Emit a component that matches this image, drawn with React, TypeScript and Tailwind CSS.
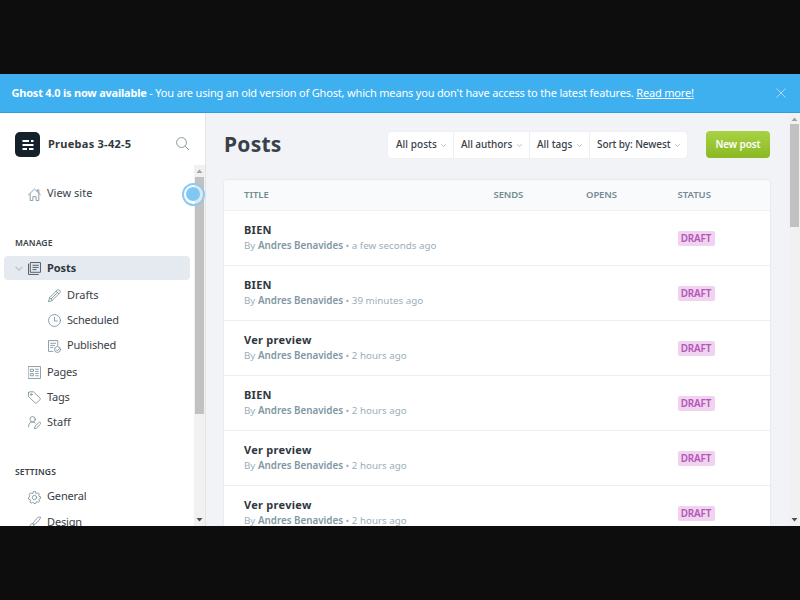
import React from 'react';

type IconProps = { className?: string; children: React.ReactNode };

function Icon({ className = '', children }: IconProps) {
  return (
    <svg viewBox="0 0 24 24" className={`h-[13px] w-[13px] shrink-0 ${className}`} fill="none" stroke="currentColor" strokeWidth="1.5" strokeLinecap="round" strokeLinejoin="round">
      {children}
    </svg>
  );
}

const icons = {
  home: <><path d="M1 12.5 12 2l11 10.5M4 11v12h5v-7h6v7h5V11M17 6V3.5h3V9" /></>,
  posts: <><path d="M5 1h18v18H5zM1 4v19h18M9 6h10M9 10h10M9 14h6" strokeWidth="1.8" /></>,
  pen: <><path d="m1 23 2-7L17 2c1-1 3-1 4.500.500S23 6 22 7L8 21zM3 16l5 5M15 4l5 5M6 18 18.500 5.500" /></>,
  clock: <><circle cx="12" cy="12" r="11" /><path d="M12 6v7h5" /></>,
  published: <><path d="M9 21H1V1h17v9M5 6h9M5 10h7M5 14h4" /><circle cx="17.500" cy="17.500" r="5.500" /><path d="m15 18 2 2 3.500-4" /></>,
  pages: <><path d="M1 1h22v22H1zM5 6h5v4H5zM5 14h5v4H5zM14 6h5M14 10h5M14 14h5M14 18h5" /></>,
  tag: <><path d="M1 3.500V10l12 12c1 1 2 1 3 0l6-6c1-1 1-2 0-3L10 1.500H3Q1 1.500 1 3.500z" /><circle cx="6" cy="6.500" r="1.500" /></>,
  staff: <><circle cx="8.500" cy="6" r="5" /><path d="M1 20c0-6 3-9 7.500-9 2 0 4 1 5 2M12 23l1-4 7-7c2-2 5 1 3 3l-7 7z" /></>,
  gear: <><circle cx="12" cy="12" r="4" /><path d="m10 1-.7 3-2.300 1-2.700-1.600L2 6.500l1.500 2.300-.8 2L0.800 12v3l3 .7 1 2-1.500 2.500 2.500 2.300 2.500-1.500 2 .9L11 23h3l.8-2.500 2-.9 2.500 1.500 2.200-2.300-1.400-2.300.9-2 2.300-.8v-3L20.500 10l-.8-2 1.400-2.500L18.500 3.300 16.300 5l-2-.9L14 1z" /></>,
  brush: <><path d="M9 14C12 8 18 2 22 1.500c2 0 1 2 0 4C19 10 15 14 11 16zM9 14c-4 0-5 2-5 5 0 2-2 3-3 3 5 2 11 0 10-6" /></>,
};

function NavItem({ icon, label, sub = false, text = '' }: { icon: React.ReactNode; label: string; sub?: boolean; text?: string }) {
  return (
    <a className={`flex h-[25.300px] shrink-0 items-center text-[#394047] ${sub ? 'gap-[6px] pl-[48px]' : 'gap-[6px] pl-[28px]'}`}>
      <Icon className="mt-[1px] text-[#738a94]">{icon}</Icon>
      <span className={`text-[11px] ${text}`}>{label}</span>
    </a>
  );
}

function Chevron({ className = '' }: { className?: string }) {
  return (
    <svg viewBox="0 0 10 6" className={`shrink-0 ${className}`} fill="none" stroke="currentColor" strokeWidth="1.400">
      <path d="m.7.7 4.300 4.300L9.300.7" />
    </svg>
  );
}

function Arrow({ down = false }: { down?: boolean }) {
  return (
    <svg viewBox="0 0 11 11" className="h-[11px] w-[11px] shrink-0">
      <path d={down ? 'M2.500 3h6l-3 3.500z' : 'M2.500 8h6l-3-3.500z'} fill={down ? '#505050' : '#a3a3a3'} />
    </svg>
  );
}

const filters = [
  { label: 'All posts', box: 'w-[65px] pl-[8px]', text: 'tracking-[0.050px]' },
  { label: 'All authors', box: 'w-[76px] border-l pl-[7px]', text: 'tracking-[-0.050px]' },
  { label: 'All tags', box: 'w-[60px] border-l pl-[7px]', text: 'tracking-[0.020px]' },
  { label: 'Sort by: Newest', box: 'w-[98px] border-l pl-[7px]', text: 'tracking-[-0.080px]' },
];

const posts = [
  { title: 'BIEN', time: 'a few seconds ago' },
  { title: 'BIEN', time: '39 minutes ago' },
  { title: 'Ver preview', time: '2 hours ago' },
  { title: 'BIEN', time: '2 hours ago' },
  { title: 'Ver preview', time: '2 hours ago' },
  { title: 'Ver preview', time: '2 hours ago' },
];

const columns = 'grid grid-cols-[249.500px_92.500px_91.500px_1fr] pl-[20px]';

function Sidebar() {
  return (
    <aside className="relative flex w-[206px] shrink-0 flex-col border-r border-[#e1e4e8] bg-white">
      <header className="flex h-[52px] shrink-0 items-start pl-[15px] pt-[19px]">
        <div className="flex h-[25px] w-[25px] items-center justify-center rounded-[5px] bg-[#15212a]">
          <svg viewBox="0 0 12 12" className="h-3 w-3" fill="#fff">
            <path d="M0.500 1h6.500v2H0.500zM9 1h2.500v2H9zM0.500 5h11v2H0.500zM0.500 9h4.500v2H0.500zM7 9h4.500v2H7z" />
          </svg>
        </div>
        <strong className="ml-[8px] w-[128px] text-[11px] font-bold leading-[24px] tracking-[0.270px] text-[#30383e]">Pruebas 3-42-5</strong>
        <svg viewBox="0 0 14 14" className="mt-[5px] h-[14px] w-[14px]" fill="none" stroke="#7b8c96" strokeWidth="0.900">
          <circle cx="5.500" cy="5.500" r="4.900" />
          <path d="m9.200 9.200 4 4" />
        </svg>
      </header>
      <div className="flex min-h-0 flex-1">
        <nav className="flex w-[194px] shrink-0 flex-col overflow-hidden pt-[16px]">
          <NavItem icon={icons.home} label="View site" text="tracking-[0.020px]" />
          <h4 className="mt-[28px] h-[17px] shrink-0 pl-[15px] text-[8.500px] font-semibold leading-[17px] tracking-[0.120px] text-[#394047]">MANAGE</h4>
          <a className="ml-[4px] mt-[5px] flex h-[24px] w-[185.500px] shrink-0 items-center rounded-[4px] bg-[#e5eaf1] pl-[11px] text-[#30383e]">
            <Chevron className="h-[5px] w-[8px] text-[#b5bec6]" />
            <Icon className="ml-[5px] text-[#505a65]">{icons.posts}</Icon>
            <span className="ml-[6px] text-[11px] font-bold tracking-[-0.080px]">Posts</span>
          </a>
          <div className="mt-[2px] flex shrink-0 flex-col">
            <NavItem sub icon={icons.pen} label="Drafts" />
            <NavItem sub icon={icons.clock} label="Scheduled" text="tracking-[-0.200px]" />
            <NavItem sub icon={icons.published} label="Published" text="tracking-[-0.200px]" />
          </div>
          <div className="mt-[1px] flex shrink-0 flex-col">
            <NavItem icon={icons.pages} label="Pages" text="tracking-[-0.200px]" />
            <NavItem icon={icons.tag} label="Tags" text="tracking-[-0.200px]" />
            <NavItem icon={icons.staff} label="Staff" />
          </div>
          <h4 className="mt-[28px] h-[17px] shrink-0 pl-[15px] text-[8.500px] font-semibold leading-[17px] tracking-[0.120px] text-[#394047]">SETTINGS</h4>
          <div className="mt-[4px] flex shrink-0 flex-col">
            <NavItem icon={icons.gear} label="General" text="tracking-[-0.150px]" />
            <NavItem icon={icons.brush} label="Design" text="tracking-[-0.150px]" />
          </div>
        </nav>
        <div className="flex w-[11px] flex-col items-center bg-[#f1f1f1]">
          <Arrow />
          <div className="mt-[1px] h-[237px] w-[9px] bg-[#c1c1c1]" />
          <div className="mt-auto"><Arrow down /></div>
        </div>
      </div>
      <div className="absolute left-[182px] top-[70px] flex h-[22.500px] w-[22.500px] items-center justify-center rounded-full border-2 border-[#8ccbf3] bg-white/60">
        <div className="h-[14px] w-[14px] rounded-full bg-[#7fc8f5]" />
      </div>
    </aside>
  );
}

export default function App() {
  return (
    <div className="flex h-[600px] w-[800px] flex-col overflow-hidden bg-[#0d0d0d] py-[74px] font-['Noto_Sans',sans-serif]">
      <div className="flex h-[452px] flex-col overflow-hidden">
        <div className="flex h-[39px] shrink-0 items-center justify-between whitespace-nowrap border-b border-[#2b9fe2] bg-[#3eb0ef] pl-[11.500px] pr-[14px] text-[11px] text-white">
          <div className="flex">
            <strong className="font-bold tracking-[-0.220px]">Ghost 4.0 is now available</strong>
            <span className="whitespace-pre tracking-[-0.172px]"> - You are using an old version of Ghost, which means you don't have access to the latest features. </span>
            <a className="tracking-[-0.180px] underline">Read more!</a>
          </div>
          <svg viewBox="0 0 10 10" className="h-[10px] w-[10px]" fill="none" stroke="#b5e1fa" strokeWidth="0.900">
            <path d="m.5.5 9 9m0-9-9 9" />
          </svg>
        </div>
        <div className="flex min-h-0 flex-1">
          <Sidebar />
          <main className="flex w-[583px] shrink-0 flex-col overflow-hidden bg-[#f1f3f7] pl-[18px]">
            <header className="flex h-[67px] shrink-0 items-start pt-[18px]">
              <h1 className="w-[164px] text-[21px] font-bold leading-[26px] tracking-[0.250px] text-[#394047]">Posts</h1>
              <div className="mt-[1px] flex h-[25.500px] rounded-[3px] bg-white shadow-[0_0_1px_rgba(0,0,0,.12)]">
                {filters.map((f) => (
                  <button key={f.label} className={`flex items-center justify-between whitespace-nowrap border-[#eceff2] pr-[7px] text-[10px] font-medium text-[#394047] ${f.box}`}>
                    <span className={f.text}>{f.label}</span>
                    <Chevron className="mt-[2px] h-[3px] w-[5px] text-[#94a4ae]" />
                  </button>
                ))}
              </div>
              <button className="ml-[19px] h-[27px] w-[64px] rounded-[4px] bg-linear-to-b from-[#a8d243] to-[#8ab923] text-[10px] font-semibold tracking-[-0.100px] text-white">New post</button>
            </header>
            <section className="w-[546px] rounded-t-[4px] bg-white shadow-[0_0_2px_rgba(0,0,0,.13)]">
              <div className={`${columns} h-[30.500px] items-center rounded-t-[4px] border-b border-[#eff2f5] bg-[#f9fafc] text-[9.500px] font-semibold text-[#738a94]`}>
                <span>TITLE</span><span className="tracking-[-0.100px]">SENDS</span><span className="tracking-[-0.100px]">OPENS</span><span>STATUS</span>
              </div>
              {posts.map((post, i) => (
                <article key={i} className={`${columns} h-[55.080px] border-b border-[#e9eff3]`}>
                  <div className="col-span-3 pt-[10px]">
                    <h3 className="text-[11px] font-bold leading-[17px] tracking-[0.270px] text-[#30383e]">{post.title}</h3>
                    <p className="whitespace-nowrap text-[9.800px] leading-[15px] text-[#9baeb8]">
                      By <strong className="font-semibold text-[#8097a3]">Andres Benavides</strong> • {post.time}
                    </p>
                  </div>
                  <div className="self-center pt-[1px]">
                    <span className="flex h-[15px] w-[37px] items-center justify-center rounded-[2px] bg-[#efd3ef] text-[9.900px] font-semibold tracking-[-0.100px] text-[#b454b8]">DRAFT</span>
                  </div>
                </article>
              ))}
            </section>
          </main>
          <div className="flex w-[11px] shrink-0 flex-col items-center bg-[#f1f1f1]">
            <Arrow />
            <div className="h-[103px] w-[9px] bg-[#c1c1c1]" />
            <div className="mt-auto"><Arrow down /></div>
          </div>
        </div>
      </div>
    </div>
  );
}
